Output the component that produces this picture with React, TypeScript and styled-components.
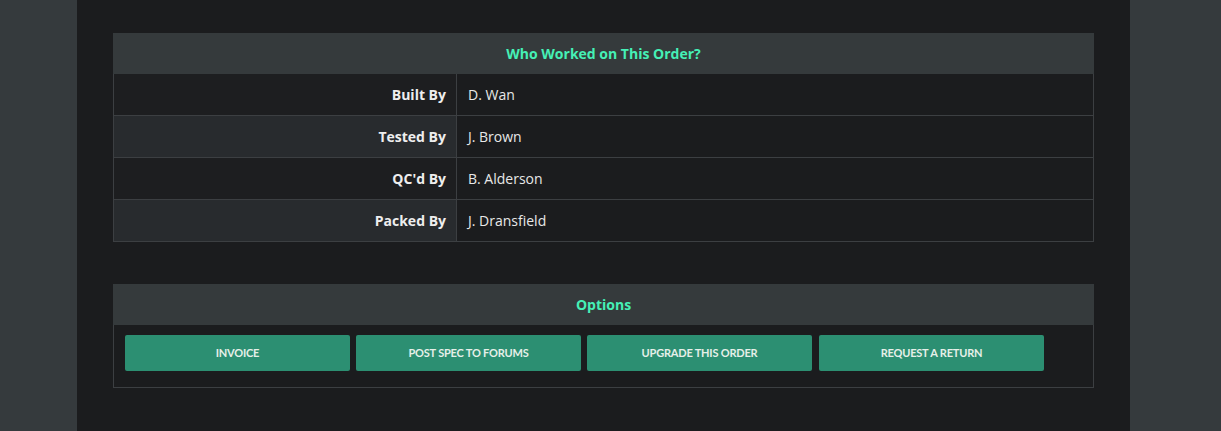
import React from 'react'
import styled, { createGlobalStyle } from 'styled-components'

const GlobalStyle = createGlobalStyle`
  html, body {
    margin: 0;
    padding: 0;
    background: #353a3d;
    font-family: 'Open Sans', 'Liberation Sans', sans-serif;
  }
`

const Page = styled.div`
  display: flex;
  justify-content: center;
  min-height: 431px;
  padding-left: 77px;
  padding-right: 91px;
`

const Column = styled.main`
  flex: 1;
  background: #1b1c1e;
  padding: 33px 36px 40px 36px;
  display: flex;
  flex-direction: column;
  gap: 42px;
`

const Panel = styled.section`
  border: 1px solid #3c3f42;
  border-top: none;
  background: #1b1c1e;
`

const PanelHeader = styled.div`
  background: #353a3c;
  color: #45f0b6;
  font-weight: 700;
  font-size: 14px;
  text-align: center;
  height: 41px;
  line-height: 41px;
  margin: 0 -1px;
`

const Row = styled.div<{ $striped: boolean }>`
  display: grid;
  grid-template-columns: 343px 1fr;
  height: 41px;
  border-bottom: 1px solid #3c3f42;

  &:last-child {
    border-bottom: none;
  }

  & > :first-child {
    background: ${({ $striped }) => ($striped ? '#282b2e' : '#1d1e20')};
  }
`

const Label = styled.div`
  display: flex;
  align-items: center;
  justify-content: flex-end;
  padding-right: 10px;
  font-weight: 700;
  font-size: 14px;
  color: #eeeeee;
  border-right: 1px solid #3c3f42;
`

const Value = styled.div`
  display: flex;
  align-items: center;
  padding-left: 11px;
  font-size: 14px;
  color: #e8e8e8;
`

const Buttons = styled.div`
  display: flex;
  gap: 6px;
  padding: 10px 11px 16px 11px;
`

const Button = styled.button`
  width: 225px;
  height: 36px;
  padding: 0 0 2px 0;
  border: none;
  border-radius: 2px;
  background: #2c8f72;
  color: #e6efe9;
  font-family: Lato, 'Liberation Sans', sans-serif;
  font-weight: 700;
  font-size: 11px;
  text-transform: uppercase;
  letter-spacing: -0.2px;
  cursor: pointer;

  &:last-child {
    margin-left: 1px;
  }
`

const workers = [
  { role: 'Built By', name: 'D. Wan' },
  { role: 'Tested By', name: 'J. Brown' },
  { role: "QC'd By", name: 'B. Alderson' },
  { role: 'Packed By', name: 'J. Dransfield' },
]

const options = ['Invoice', 'Post spec to forums', 'Upgrade this order', 'Request a return']

const App = () => (
  <>
    <GlobalStyle />
    <Page>
      <Column>
        <Panel>
          <PanelHeader>Who Worked on This Order?</PanelHeader>
          {workers.map((w, i) => (
            <Row key={w.role} $striped={i % 2 === 1}>
              <Label>{w.role}</Label>
              <Value>{w.name}</Value>
            </Row>
          ))}
        </Panel>
        <Panel>
          <PanelHeader>Options</PanelHeader>
          <Buttons>
            {options.map((o) => (
              <Button key={o}>{o}</Button>
            ))}
          </Buttons>
        </Panel>
      </Column>
    </Page>
  </>
)

export default App
